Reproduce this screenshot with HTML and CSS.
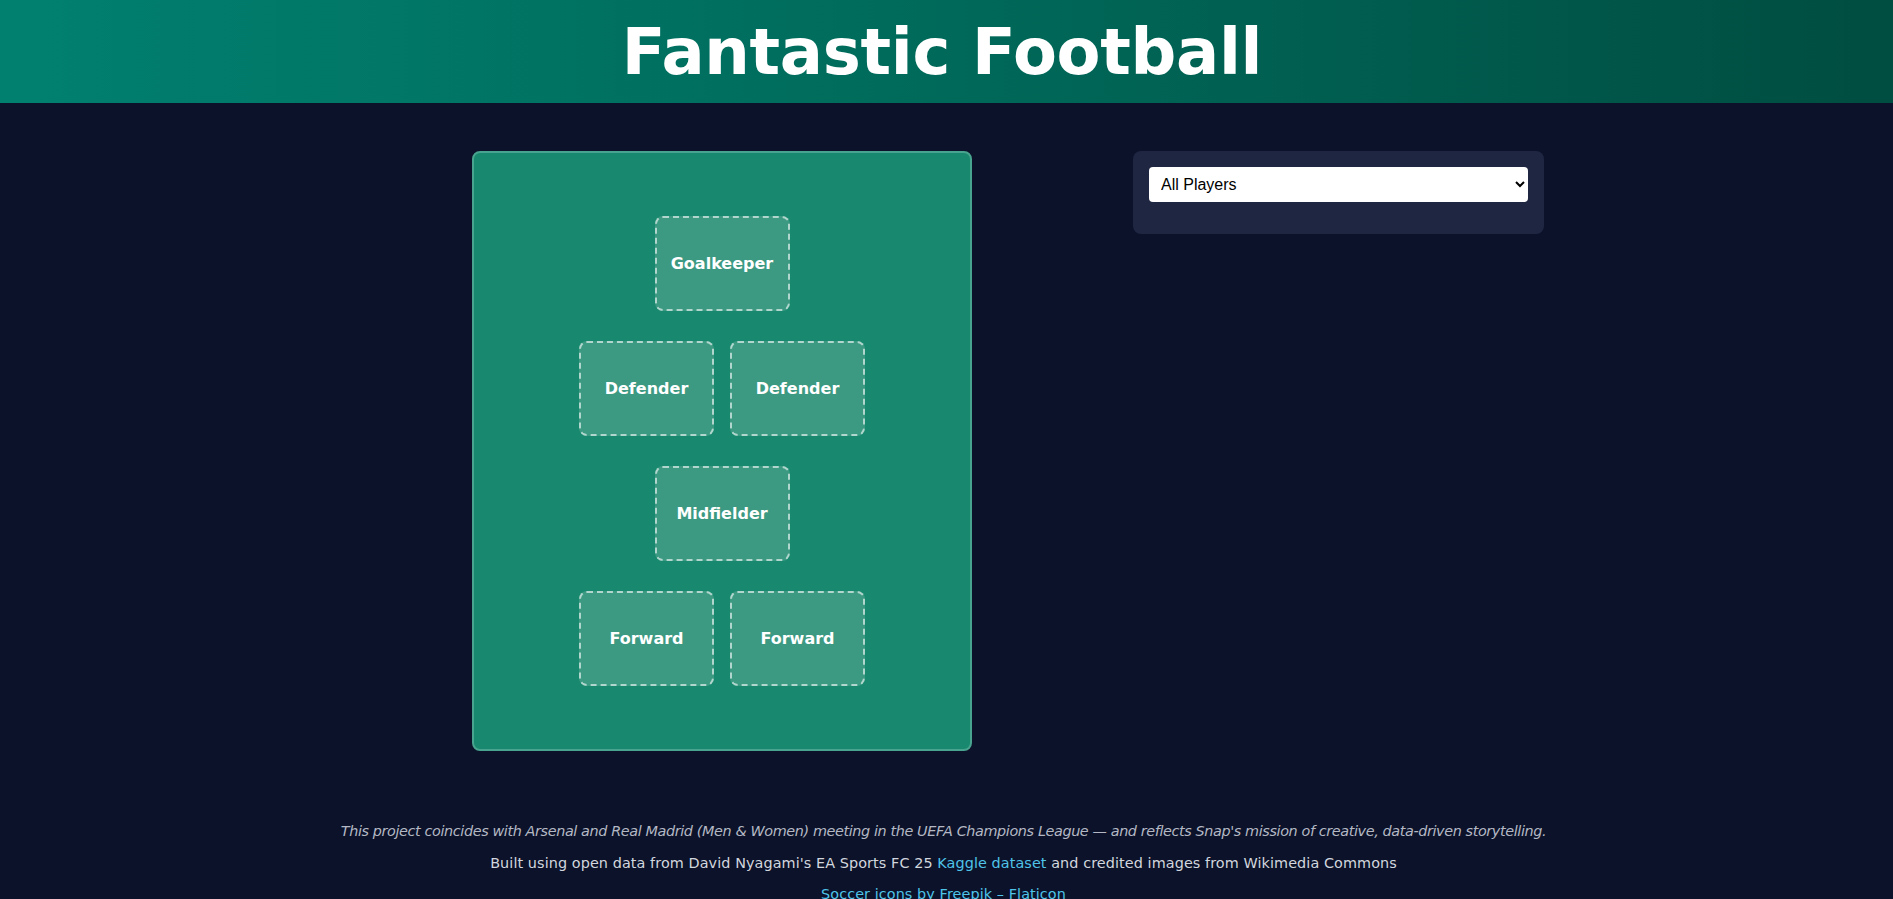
FILE: index.html
```html
<!DOCTYPE html>
<html lang="en">
<head>
<meta charset="utf-8">
<title>Fantastic Football</title>
<link rel="stylesheet" href="styles.css">
</head>
<body>
<header class="site-header">
  <h1 class="title">Fantastic Football</h1>
</header>
<main class="layout">
  <section class="pitch">
    <div class="row"><div class="slot">Goalkeeper</div></div>
    <div class="row"><div class="slot">Defender</div><div class="slot">Defender</div></div>
    <div class="row"><div class="slot">Midfielder</div></div>
    <div class="row"><div class="slot">Forward</div><div class="slot">Forward</div></div>
  </section>
  <aside class="panel">
    <select class="filter">
      <option>All Players</option>
      <option>Arsenal</option>
      <option>Real Madrid</option>
    </select>
  </aside>
</main>
<footer class="site-footer">
  <p class="note">This project coincides with Arsenal and Real Madrid (Men &amp; Women) meeting in the UEFA Champions League — and reflects Snap's mission of creative, data-driven storytelling.</p>
  <p class="credit">Built using open data from David Nyagami's EA Sports FC 25 <a href="#">Kaggle dataset</a> and credited images from Wikimedia Commons</p>
  <p class="credit"><a href="#">Soccer icons by Freepik – Flaticon</a></p>
</footer>
</body>
</html>
```

FILE: styles.css
```css
* { box-sizing: border-box; }

html, body {
  margin: 0;
  padding: 0;
}

body {
  background: #0b1229;
  color: #ffffff;
  font-family: "DejaVu Sans", Verdana, sans-serif;
}

.site-header {
  height: 103px;
  background: linear-gradient(90deg, #018070 0%, #006c5c 45%, #004d41 100%);
  display: flex;
  align-items: center;
  justify-content: center;
  padding-right: 9px;
}

.title {
  margin: 0;
  font-size: 64px;
  font-weight: bold;
  letter-spacing: -0.3px;
  color: #ffffff;
}

.layout {
  display: grid;
  grid-template-columns: 500px 411px;
  column-gap: 161px;
  justify-content: center;
  align-items: start;
  padding: 48px 0 0 123px;
}

.pitch {
  height: 600px;
  background: #18896e;
  border: 2px solid #48a48e;
  border-radius: 8px;
  display: flex;
  flex-direction: column;
  justify-content: center;
  gap: 30px;
}

.row {
  display: flex;
  justify-content: center;
  gap: 16px;
}

.slot {
  width: 135px;
  height: 95px;
  background: #3c9982;
  border: 2px dashed rgba(255, 255, 255, 0.6);
  border-radius: 8px;
  display: flex;
  align-items: center;
  justify-content: center;
  font-size: 16px;
  font-weight: bold;
  color: #ffffff;
}

.panel {
  background: #1e2642;
  border-radius: 8px;
  padding: 16px 16px 32px;
}

.filter {
  display: block;
  width: 100%;
  height: 35px;
  padding: 0 8px;
  border: none;
  border-radius: 4px;
  background: #ffffff;
  color: #000000;
  font-family: "Liberation Sans", Arial, sans-serif;
  font-size: 16px;
}

.site-footer {
  margin-top: 72px;
  text-align: center;
  font-size: 14.4px;
  padding-right: 6px;
}

.site-footer p {
  margin: 14.5px 0;
  line-height: 17px;
}

.note {
  font-style: italic;
  letter-spacing: -0.39px;
  color: #b4b8c4;
}

.credit {
  letter-spacing: 0.08px;
  color: #d2d6de;
}

.site-footer a {
  color: #4fc3e8;
  text-decoration: none;
}
```
